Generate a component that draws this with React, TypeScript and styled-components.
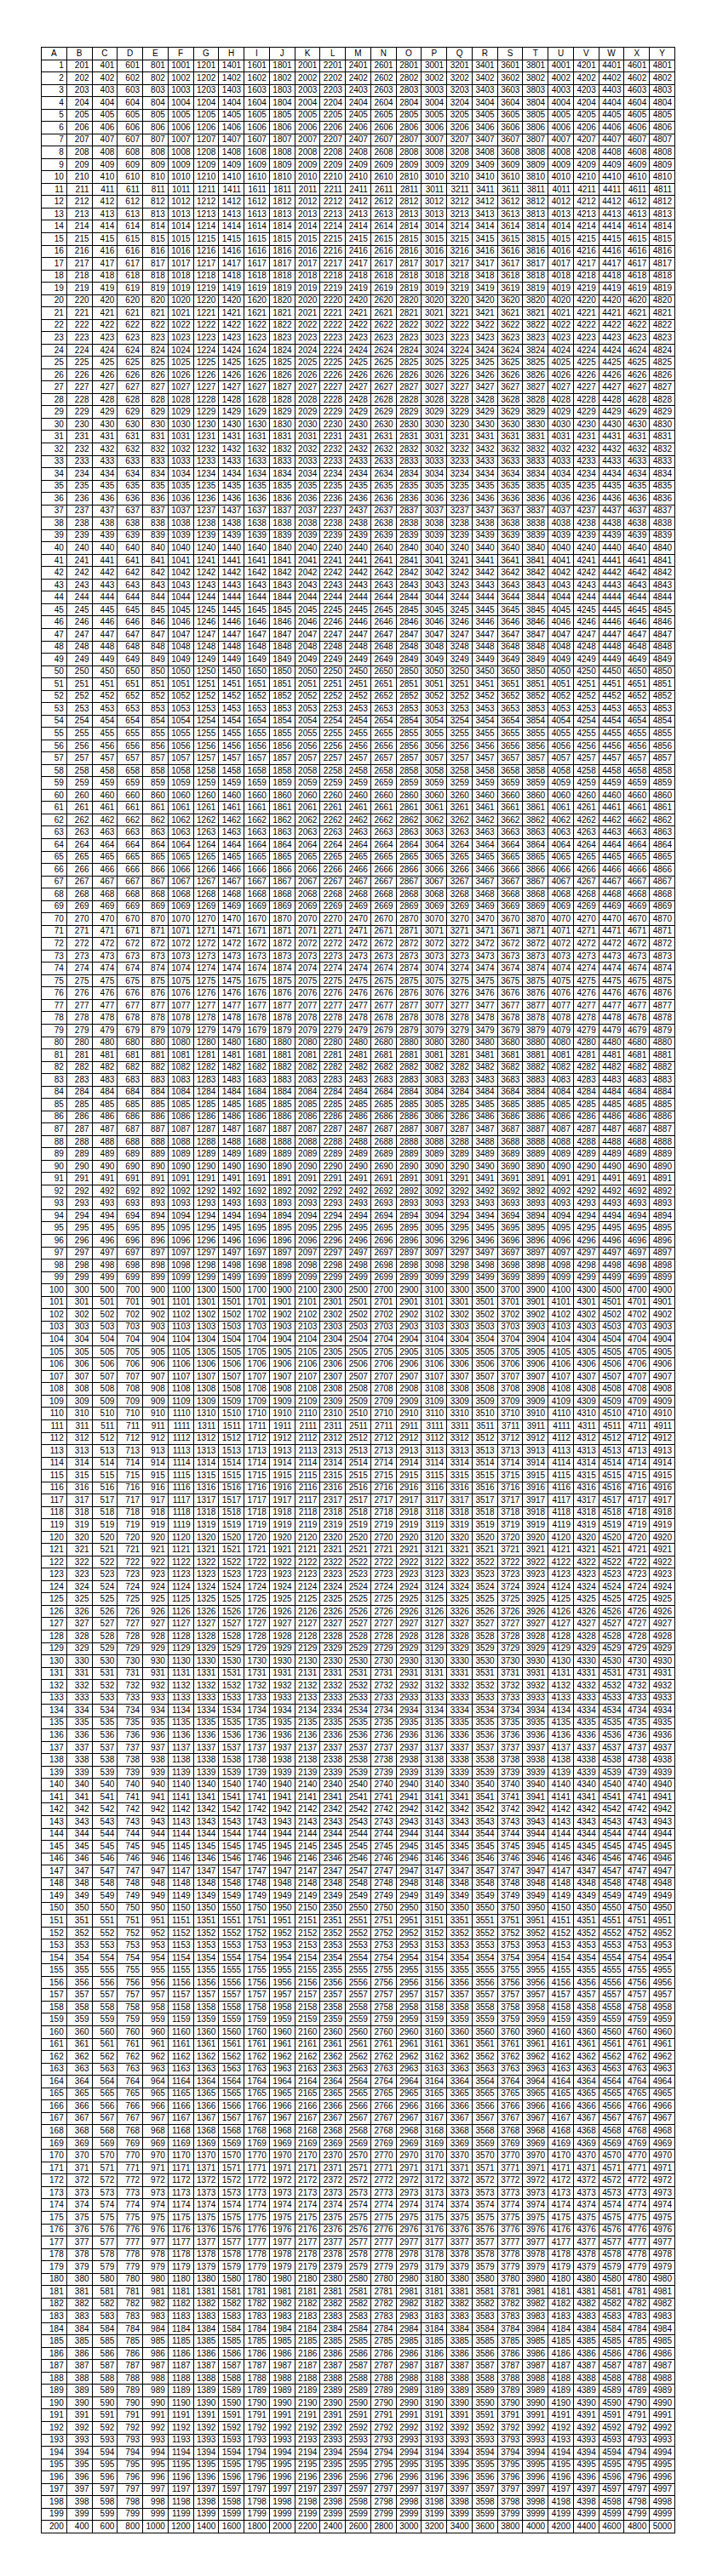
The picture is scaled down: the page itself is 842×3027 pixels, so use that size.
import styled, { createGlobalStyle } from 'styled-components';

const COLUMNS = 'ABCDEFGHIJKLMNOPQRSTUVWXY'.split('');
const ROW_COUNT = 200;
const ROW_HEIGHT = 14.537;

const GlobalStyle = createGlobalStyle`
  html, body {
    margin: 0;
    padding: 0;
    background: #ffffff;
  }
`;

const Page = styled.main`
  padding: 55px 0 0 48px;
  min-height: 3027px;
  box-sizing: border-box;
`;

const Sheet = styled.div`
  display: grid;
  grid-template-columns: repeat(${COLUMNS.length}, 1fr);
  grid-auto-rows: ${ROW_HEIGHT}px;
  width: 745px;
  border-top: 1px solid #000;
  border-left: 1px solid #000;
  box-sizing: border-box;
  font-family: 'Liberation Sans', Arial, sans-serif;
  font-size: 10px;
  color: #000;
`;

const Cell = styled.div<{ $header?: boolean }>`
  display: flex;
  align-items: center;
  justify-content: ${({ $header }) => ($header ? 'center' : 'flex-end')};
  padding-right: ${({ $header }) => ($header ? '0' : '3px')};
  border-right: 1px solid #000;
  border-bottom: 1px solid #000;
  box-sizing: border-box;
  line-height: 1;
  white-space: nowrap;
  overflow: hidden;
`;

const rows = Array.from({ length: ROW_COUNT }, (_, i) => i + 1);

const App = () => (
  <>
    <GlobalStyle />
    <Page>
      <Sheet>
        {COLUMNS.map((col) => (
          <Cell key={col} $header>
            {col}
          </Cell>
        ))}
        {rows.map((row) =>
          COLUMNS.map((col, c) => <Cell key={`${col}${row}`}>{c * 200 + row}</Cell>),
        )}
      </Sheet>
    </Page>
  </>
);

export default App;
